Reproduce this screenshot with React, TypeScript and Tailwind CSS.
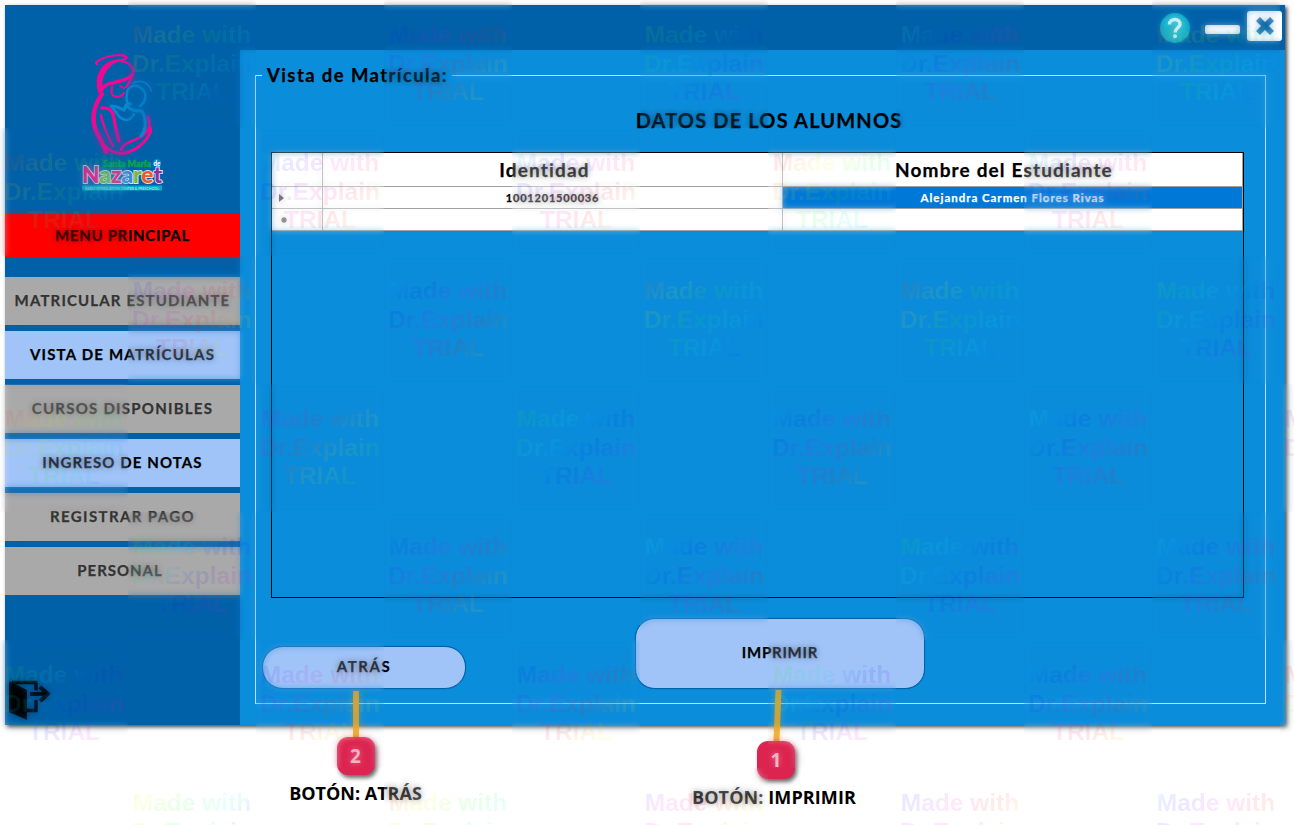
import React from "react";

const watermarkTiles: [number, number, number][] = [
  [1, 0, 20], [3, 0, 220], [5, 0, 90], [7, 0, 165], [9, 0, 10],
  [0, 1, 0], [2, 1, 190], [4, 1, 190], [6, 1, 350], [8, 1, 185],
  [1, 2, 230], [3, 2, 195], [5, 2, 20], [7, 2, 5], [9, 2, 90],
  [0, 3, 0], [2, 3, 270], [4, 3, 100], [6, 3, 200], [8, 3, 165], [10, 3, 260],
  [1, 4, 110], [3, 4, 215], [5, 4, 165], [7, 4, 115], [9, 4, 175],
  [0, 5, 110], [2, 5, 235], [4, 5, 225], [6, 5, 110], [8, 5, 200], [10, 5, 350],
  [1, 6, 50], [3, 6, 10], [5, 6, 265], [7, 6, 235], [9, 6, 210],
];

function rainbow(hue: number) {
  const stops = Array.from({ length: 12 }, (_, i) => `hsl(${hue - 45 + i * 30} 100% 50%)`);
  return `linear-gradient(135deg, ${stops.join(", ")})`;
}

function Watermark() {
  return (
    <div className="pointer-events-none absolute inset-0 grid grid-cols-[repeat(11,128px)] grid-rows-[repeat(7,128px)] overflow-hidden">
      {watermarkTiles.map(([col, row, hue]) => (
        <div key={`${col}-${row}`} className="relative" style={{ gridColumn: col + 1, gridRow: row + 1 }}>
          <div className="absolute inset-0 opacity-40 backdrop-blur-[3px]" />
          <div
            className="relative h-full bg-clip-text pt-[21px] text-center font-['Liberation_Sans',sans-serif] text-[24.5px] leading-[28.5px] font-bold text-transparent opacity-[0.09]"
            style={{ backgroundImage: rainbow(hue) }}
          >
            Made with
            <br />
            Dr.Explain
            <br />
            TRIAL
          </div>
        </div>
      ))}
    </div>
  );
}

function Logo() {
  return (
    <svg viewBox="0 0 84 140" className="ml-[76px] h-[140px] w-[84px]">
      <g fill="none" stroke="#ee0a90" strokeLinecap="round" strokeLinejoin="round">
        <path d="M16 11C12 10 21 4 33 2.500c9-1 15 1 12 3-2 1-5 2-8 2" strokeWidth="2.2" />
        <path d="M22 36C16 22 22 9 35 8c13-1 20 7 16 16-2 4-3 7-6 10" strokeWidth="2.4" />
        <path d="M18 40c-5-16 2-31 18-32C26 13 20 22 20 36z" fill="#ee0a90" strokeWidth="1.400" />
        <path d="M20 38c5-12 22-6 31-16" strokeWidth="3.400" />
        <path d="M31 34c-1 5-1 8 2 9 5 2 9-1 10-3" strokeWidth="2.200" />
        <path d="M39 33l4 2" strokeWidth="1.8" />
        <path d="M21 41c-9 13-12 26-4 41 3 6 6 11 8 17" strokeWidth="4.400" />
        <path d="M21 55c8-1 11 4 12 10 1 9 3 16 5 23" strokeWidth="3.400" />
        <path d="M20 62c2 12 7 21 12 31" strokeWidth="2.400" />
        <path d="M67 64c5 12-4 20-16 24-6 2-10 4-11 9" strokeWidth="2.8" />
        <path d="M69 74c3 4-5 19-21 25-14 5-25-4-30-15" strokeWidth="3" />
      </g>
      <g fill="none" stroke="#0887cf" strokeLinecap="round">
        <path d="M52 30c7-4 17 0 18 8" strokeWidth="1.8" />
        <path d="M50 51c-5 0-5-5-4-9-1-8 8-12 14-7 6 4 6 13-1 18" strokeWidth="2.6" />
        <path d="M30 53c5 0 9 2 13 4 3-3 0-5 4-6-1 6 7 7 14 7 5 9 4 19-1 25" strokeWidth="3.200" />
        <path d="M31 54c5 5 6 12 14 13 4 0 6-2 8-6" strokeWidth="2.6" />
      </g>
      <g className="font-['Lato',sans-serif] font-black">
        <text x="22" y="113.500" fontSize="9" textLength="48" fill="#0aa653" stroke="#0aa653" strokeWidth="0.400">Santa María</text>
        <circle cx="76" cy="110" r="4" fill="#0788d3" />
        <text x="72.5" y="112.5" fontSize="6.5" textLength="7" lengthAdjust="spacingAndGlyphs" fill="#fff">de</text>
        <text x="1" y="130" fontSize="22" textLength="80" lengthAdjust="spacingAndGlyphs" stroke="#d8e6f4" strokeWidth="1.800" paintOrder="stroke">
          <tspan fill="#e01a80">N</tspan><tspan fill="#62b64c">a</tspan><tspan fill="#e32478">z</tspan><tspan fill="#3c88cf">a</tspan><tspan fill="#74b93c">r</tspan><tspan fill="#f15a24">e</tspan><tspan fill="#8f2f9b">t</tspan>
        </text>
      </g>
      <rect x="1" y="132.500" width="80" height="5" fill="#0aaac9" />
      <text x="4" y="136.700" fontSize="3.600" textLength="74" lengthAdjust="spacingAndGlyphs" fill="#a5dcec" className="font-['Lato',sans-serif]">EARLY STIMULATION CENTER &amp; PRESCHOOL</text>
    </svg>
  );
}

const menu = [
  { label: "MATRICULAR ESTUDIANTE", cls: "bg-[#a9a9a9] text-[#333333] tracking-[1.15px]" },
  { label: "VISTA DE MATRÍCULAS", cls: "bg-[#a0c4f8] text-black tracking-[1.2px]" },
  { label: "CURSOS DISPONIBLES", cls: "bg-[#a9a9a9] text-[#333333] tracking-[1.25px]" },
  { label: "INGRESO DE NOTAS", cls: "bg-[#a0c4f8] text-black tracking-[1.1px]" },
  { label: "REGISTRAR PAGO", cls: "bg-[#a9a9a9] text-[#333333] tracking-[1.4px]" },
  { label: "PERSONAL", cls: "bg-[#a9a9a9] pr-[5px] text-[#333333] tracking-[0.95px]" },
];

function Sidebar() {
  return (
    <aside className="flex w-[235px] shrink-0 flex-col bg-[#0061a9] text-[15px] font-bold [-webkit-text-stroke:0.25px]">
      <div className="h-[164px] pt-[3px] [-webkit-text-stroke:0]">
        <Logo />
      </div>
      <div className="flex h-11 items-center justify-center bg-[#ff0000] pb-0.5 tracking-[0.7px]">MENU PRINCIPAL</div>
      <nav className="mt-[19px] flex flex-col gap-1.5">
        {menu.map((m) => (
          <button key={m.label} className={`h-12 pb-0.5 whitespace-nowrap ${m.cls}`}>
            {m.label}
          </button>
        ))}
      </nav>
      <svg viewBox="0 0 42 42" className="mt-auto mb-[3px] ml-1 h-[42px] w-[42px]">
        <path d="M0 1l18 9v30L0 32z" />
        <path d="M3 2.500h24v8M27 20v10.500h-9" fill="none" stroke="#000" strokeWidth="3.500" />
        <path d="M21 14h17M31 7l8 7-8 7" fill="none" stroke="#000" strokeWidth="4" strokeLinejoin="round" />
      </svg>
    </aside>
  );
}

function TitleBar() {
  return (
    <header className="flex h-[45px] shrink-0 items-start justify-end bg-[#0061a9] pt-[6px] pr-[3px]">
      <div className="mt-0.5 flex h-[30px] w-[30px] items-center justify-center rounded-full bg-[#14b6cf]">
        <svg viewBox="0 0 30 30" className="h-[30px] w-[30px]" fill="none" stroke="#fff" strokeWidth="3.400">
          <path d="M9.500 11.500C9.500 4.500 20.500 5 20 11.500c-.3 3.500-5 3.500-5 8" />
          <circle cx="15" cy="23.300" r="2" fill="#fff" stroke="none" />
        </svg>
      </div>
      <div className="mt-3.5 ml-[15px] h-[9px] w-[35px] rounded-[2px] bg-white" />
      <div className="ml-[7px] flex h-[30px] w-[35px] items-center justify-center rounded-[3px] bg-white">
        <svg viewBox="0 0 18 18" className="h-[18px] w-[18px]">
          <path d="M2 2l14 14M16 2L2 16" stroke="#0061a9" strokeWidth="5.600" />
        </svg>
      </div>
    </header>
  );
}

function StudentsTable() {
  return (
    <div className="mt-5 ml-[15px] h-[446px] w-[973px] border border-black">
      <div className="grid grid-cols-[51px_460px_460px] grid-rows-[34px_22px_22px] bg-white text-center font-bold *:border-r *:border-b *:border-[#a0a0a0]">
        <div />
        <div className="pr-[16px] text-[19px] leading-[34px] tracking-[1.15px] [-webkit-text-stroke:0.25px]">Identidad</div>
        <div className="pr-[17px] text-[19px] leading-[34px] tracking-[1.15px] [-webkit-text-stroke:0.25px]">Nombre del Estudiante</div>
        <div className="flex items-center pl-[7px]">
          <svg viewBox="0 0 5 8" className="h-2 w-[5px]"><path d="M0 0l5 4-5 4z" fill="#444" /></svg>
        </div>
        <div className="text-[11px] leading-[21px] tracking-[0.8px] [-webkit-text-stroke:0.25px]">1001201500036</div>
        <div className="bg-[#0078d7] text-[11.5px] leading-[21px] tracking-[0.98px] text-white [-webkit-text-stroke:0.25px]">Alejandra Carmen Flores Rivas</div>
        <div className="flex items-center pl-[9px]">
          <svg viewBox="0 0 6 6" className="h-1.5 w-1.5" stroke="#555" strokeWidth="1.100"><path d="M3 0v6M0 3h6M1 1l4 4M5 1L1 5" /></svg>
        </div>
        <div />
        <div />
      </div>
    </div>
  );
}

function Callout({ n, label, box, line, text }: { n: string; label: string; box: string; line: React.ReactNode; text: string }) {
  return (
    <div className={box}>
      {line}
      <div className="flex h-[38px] w-[38px] items-center justify-center rounded-[11px] bg-[#dc2450] font-['Open_Sans',sans-serif] text-[19px] font-bold text-[#fbe3ea] shadow-[2px_3px_4px_rgba(0,0,0,0.6)]">
        {n}
      </div>
      <div className={text}>{label}</div>
    </div>
  );
}

export default function App() {
  return (
    <div className="relative h-[825px] w-[1294px] overflow-hidden bg-white p-[5px] font-['Lato',sans-serif] text-black">
      <div className="flex h-[720px] w-[1280px] flex-col bg-[#0a8ddb] shadow-[2px_2px_4px_rgba(0,0,0,0.75)]">
        <TitleBar />
        <div className="flex min-h-0 grow">
          <Sidebar />
          <main className="flex grow flex-col pt-[14px] pr-[19px] pb-[21px] pl-[15px]">
            <fieldset className="flex h-[640px] w-[1011px] flex-col border border-[#bfe2f8]">
              <legend className="ml-[6px] h-[23px] w-[190px] pl-[5px] text-[18.5px] leading-[23px] font-bold tracking-[1.4px] whitespace-nowrap [-webkit-text-stroke:0.25px]">Vista de Matrícula:</legend>
              <h1 className="mt-[21px] h-6 pl-[17px] text-center text-[20px] leading-[25px] font-bold tracking-[1.15px] [-webkit-text-stroke:0.25px]">DATOS DE LOS ALUMNOS</h1>
              <StudentsTable />
              <div className="mt-5 flex items-end pl-[6px] text-[15px] font-bold [-webkit-text-stroke:0.25px]">
                <button className="h-[43px] w-[204px] rounded-[21px] border border-[#0061a9] bg-[#a0c4f8] pb-0.5 tracking-[1.6px] shadow-[0_0_1px_#0061a9]">ATRÁS</button>
                <button className="ml-[169px] h-[71px] w-[290px] rounded-[20px] border border-[#0061a9] bg-[#a0c4f8] pb-0.5 tracking-[0.75px] shadow-[0_0_1px_#0061a9]">IMPRIMIR</button>
              </div>
            </fieldset>
          </main>
        </div>
      </div>
      <Callout
        n="2"
        label="BOTÓN: ATRÁS"
        box="absolute top-[691px] left-[285px] flex w-[141px] flex-col items-center"
        line={<div className="h-[46px] w-[6px] bg-[#efa51e]" />}
        text="mt-1.5 font-['Open_Sans',sans-serif] text-[18px] leading-6 font-bold whitespace-nowrap"
      />
      <Callout
        n="1"
        label="BOTÓN: IMPRIMIR"
        box="absolute top-[690px] left-[687px] flex w-[178px] flex-col items-center"
        line={<svg viewBox="0 0 12 51" className="ml-1 h-[51px] w-3"><path d="M4 51L6 0" transform="translate(.5)" stroke="#efa51e" strokeWidth="6" /></svg>}
        text="mt-1.5 -ml-1 font-['Open_Sans',sans-serif] text-[18px] leading-6 font-bold tracking-[0.1px] whitespace-nowrap"
      />
      <Watermark />
    </div>
  );
}
